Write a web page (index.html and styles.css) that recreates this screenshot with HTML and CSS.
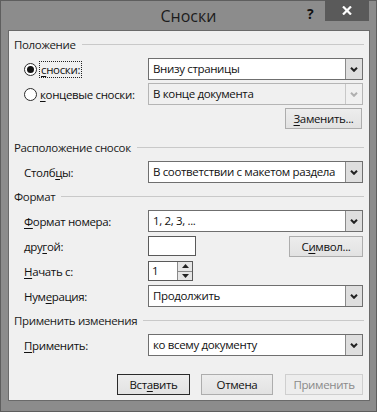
FILE: index.html
```html
<!DOCTYPE html>
<html lang="ru">
  <head>
    <meta charset="utf-8" />
    <title>Сноски</title>
    <link rel="stylesheet" href="styles.css">
  </head>
  <body>
    <div class="window">
      <div class="titlebar">
        <span class="title">Сноски</span>
        <span class="help">?</span>
        <span class="close">
          <svg width="10" height="9" viewBox="0 0 10 9"><path d="M1 0.5 L9 8.5 M9 0.5 L1 8.5" stroke="#fff" stroke-width="2.2"/></svg>
        </span>
      </div>

      <form class="panel">
        <div class="group-head">Положение</div>
        <div class="row">
          <label class="label radio-label">
            <span class="radio checked"></span>
            <span class="focus"><u>с</u>носки:</span>
          </label>
          <div class="select">
            <span class="value">Внизу страницы</span>
            <span class="arrow"><svg width="8" height="5" viewBox="0 0 8 5"><path d="M1 0.8 L4 3.8 L7 0.8" fill="none" stroke="#222" stroke-width="2"/></svg></span>
          </div>
        </div>
        <div class="row">
          <label class="label radio-label">
            <span class="radio"></span>
            <span><u>к</u>онцевые сноски:</span>
          </label>
          <div class="select disabled">
            <span class="value">В конце документа</span>
            <span class="arrow"><svg width="8" height="5" viewBox="0 0 8 5"><path d="M1 0.8 L4 3.8 L7 0.8" fill="none" stroke="#b0b0b0" stroke-width="2"/></svg></span>
          </div>
        </div>
        <div class="row-btn">
          <button type="button" class="btn btn-replace"><u>З</u>аменить...</button>
        </div>

        <div class="group-head group-next">Расположение сносок</div>
        <div class="row">
          <span class="label">Столб<u>ц</u>ы:</span>
          <div class="select">
            <span class="value">В соответствии с макетом раздела</span>
            <span class="arrow"><svg width="8" height="5" viewBox="0 0 8 5"><path d="M1 0.8 L4 3.8 L7 0.8" fill="none" stroke="#222" stroke-width="2"/></svg></span>
          </div>
        </div>

        <div class="group-head group-tight">Формат</div>
        <div class="row">
          <span class="label"><u>Ф</u>ормат номера:</span>
          <div class="select">
            <span class="value">1, 2, 3, ...</span>
            <span class="arrow"><svg width="8" height="5" viewBox="0 0 8 5"><path d="M1 0.8 L4 3.8 L7 0.8" fill="none" stroke="#222" stroke-width="2"/></svg></span>
          </div>
        </div>
        <div class="row">
          <span class="label">дру<u>г</u>ой:</span>
          <span class="input-small"></span>
          <button type="button" class="btn btn-symbol">С<u>и</u>мвол...</button>
        </div>
        <div class="row">
          <span class="label"><u>Н</u>ачать с:</span>
          <div class="spin">
            <span class="spin-value">1</span>
            <span class="spin-btns">
              <span class="spin-btn"><svg width="7" height="4" viewBox="0 0 7 4"><path d="M0 4 L3.5 0 L7 4 Z" fill="#222"/></svg></span>
              <span class="spin-btn"><svg width="7" height="4" viewBox="0 0 7 4"><path d="M0 0 L3.5 4 L7 0 Z" fill="#222"/></svg></span>
            </span>
          </div>
        </div>
        <div class="row">
          <span class="label">Нум<u>е</u>рация:</span>
          <div class="select">
            <span class="value">Продолжить</span>
            <span class="arrow"><svg width="8" height="5" viewBox="0 0 8 5"><path d="M1 0.8 L4 3.8 L7 0.8" fill="none" stroke="#222" stroke-width="2"/></svg></span>
          </div>
        </div>

        <div class="group-head group-tight">Применить изменения</div>
        <div class="row">
          <span class="label"><u>П</u>рименить:</span>
          <div class="select">
            <span class="value">ко всему документу</span>
            <span class="arrow"><svg width="8" height="5" viewBox="0 0 8 5"><path d="M1 0.8 L4 3.8 L7 0.8" fill="none" stroke="#222" stroke-width="2"/></svg></span>
          </div>
        </div>

        <div class="actions">
          <button type="button" class="btn btn-default">Вст<u>а</u>вить</button>
          <button type="button" class="btn btn-cancel">Отмена</button>
          <button type="button" class="btn btn-disabled">Применить</button>
        </div>
      </form>
    </div>
  </body>
</html>
```

FILE: styles.css
```css
/* Word "Сноски" dialog, Windows 8 look, greyscale */
body {
  margin: 0;
  background: #8c8c8c;
}

.window {
  width: 375px;
  height: 410px;
  background: #8c8c8c;
  border: 1px solid #5e5e5e;
  font-family: "Open Sans", "Noto Sans", sans-serif;
  font-size: 11.5px;
  letter-spacing: -0.35px;
  color: #111;
}

.titlebar {
  position: relative;
  height: 29px;
}

.title {
  display: block;
  text-align: center;
  font-size: 16px;
  letter-spacing: 0;
  line-height: 30px;
  color: #1c1c1c;
}

.help {
  position: absolute;
  left: 306px;
  top: 3px;
  font-weight: bold;
  font-size: 14px;
  color: #111;
}

.close {
  position: absolute;
  left: 324px;
  top: -1px;
  width: 44px;
  height: 21px;
  background: #5a5a5a;
  display: flex;
  align-items: center;
  justify-content: center;
}

.panel {
  margin: 0 6px 0 7px;
  height: 364px;
  background: #f0f0f0;
  border: 1px solid #6a6a6a;
  padding: 5px 6px 0 5px;
}

.group-head {
  display: flex;
  align-items: center;
  height: 16px;
  color: #1a1a1a;
}

.group-head::after {
  content: "";
  flex: 1;
  height: 1px;
  background: #c9c9c9;
  margin-left: 6px;
  margin-right: -1px;
}

.group-next {
  margin-top: 10px;
}

.group-tight {
  margin-top: 5px;
}

.row {
  display: flex;
  align-items: center;
  height: 22px;
  margin-top: 3px;
}

.group-head + .row {
  margin-top: 6px;
}

.label {
  width: 124px;
  margin-left: 10px;
  white-space: nowrap;
}

.radio-label {
  display: flex;
  align-items: center;
}

.radio {
  width: 11px;
  height: 11px;
  border: 1px solid #2b2b2b;
  border-radius: 50%;
  background: #fff;
  margin-right: 3px;
  position: relative;
}

.radio.checked::after {
  content: "";
  position: absolute;
  left: 2px;
  top: 2px;
  width: 7px;
  height: 7px;
  border-radius: 50%;
  background: #111;
}

.focus {
  outline: 1px dotted #222;
  outline-offset: 0;
  padding: 0 1px;
  line-height: 15px;
}

u {
  text-decoration-thickness: 1px;
  text-underline-offset: 2px;
}

.select {
  flex: 1;
  display: flex;
  height: 20px;
  border: 1px solid #6f6f6f;
  background: #fff;
}

.select .value {
  flex: 1;
  padding-left: 4px;
  line-height: 20px;
  white-space: nowrap;
  overflow: hidden;
}

.select .arrow {
  width: 16px;
  border-left: 1px solid #8a8a8a;
  background: #dedede;
  display: flex;
  align-items: center;
  justify-content: center;
}

.select.disabled {
  background: #f0f0f0;
  border-color: #b5b5b5;
}

.select.disabled .arrow {
  background: #f0f0f0;
  border-left-color: #c8c8c8;
}

.input-small {
  width: 46px;
  height: 18px;
  border: 1px solid #5a5a5a;
  background: #fff;
}

.spin {
  display: flex;
  width: 43px;
  height: 18px;
  border: 1px solid #5a5a5a;
  background: #fff;
}

.spin-value {
  flex: 1;
  padding-left: 3px;
  line-height: 18px;
}

.spin-btns {
  display: flex;
  flex-direction: column;
  width: 14px;
  border-left: 1px solid #8a8a8a;
}

.spin-btn {
  flex: 1;
  background: #e6e6e6;
  display: flex;
  align-items: center;
  justify-content: center;
}

.spin-btn + .spin-btn {
  border-top: 1px solid #8a8a8a;
}

.btn {
  height: 21px;
  padding: 0;
  border: 1px solid #adadad;
  background: linear-gradient(#ededed, #e2e2e2);
  font-family: inherit;
  font-size: 11.5px;
  letter-spacing: inherit;
  color: #111;
}

.row-btn {
  display: flex;
  justify-content: flex-end;
  margin-top: 3px;
}

.btn-replace {
  width: 77px;
  margin-right: 1px;
}

.btn-symbol {
  width: 74px;
  margin-left: auto;
  height: 21px;
}

.actions {
  display: flex;
  justify-content: flex-end;
  gap: 11px;
  margin-top: 18px;
}

.btn-default {
  width: 73px;
  border-color: #2a2a2a;
}

.btn-cancel {
  width: 72px;
  margin-right: 1px;
}

.btn-disabled {
  width: 78px;
  border-color: #cfcfcf;
  background: #ededed;
  color: #8a8a8a;
}
```
